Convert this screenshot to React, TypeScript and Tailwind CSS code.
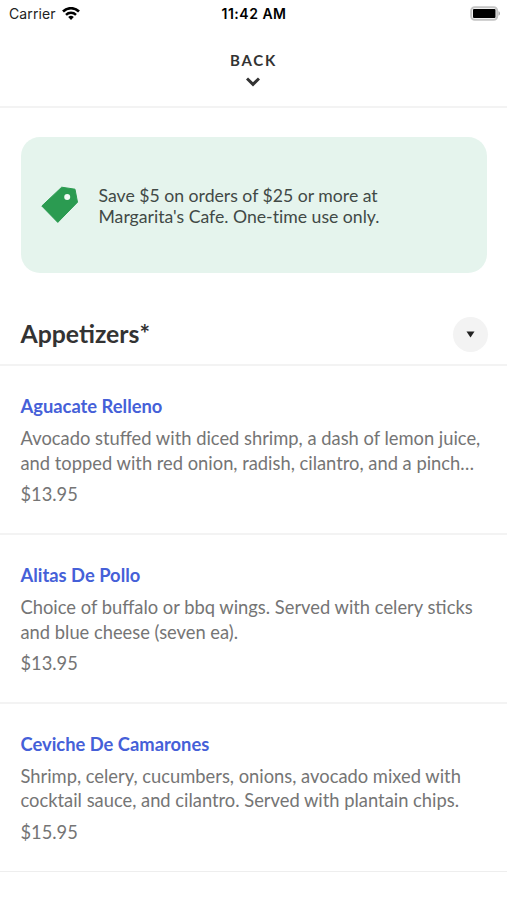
type MenuItem = {
  name: string;
  lines: string[];
  price: string;
};

const appetizers: MenuItem[] = [
  {
    name: "Aguacate Relleno",
    lines: [
      "Avocado stuffed with diced shrimp, a dash of lemon juice,",
      "and topped with red onion, radish, cilantro, and a pinch…",
    ],
    price: "$13.95",
  },
  {
    name: "Alitas De Pollo",
    lines: [
      "Choice of buffalo or bbq wings. Served with celery sticks",
      "and blue cheese (seven ea).",
    ],
    price: "$13.95",
  },
  {
    name: "Ceviche De Camarones",
    lines: [
      "Shrimp, celery, cucumbers, onions, avocado mixed with",
      "cocktail sauce, and cilantro. Served with plantain chips.",
    ],
    price: "$15.95",
  },
];

function StatusBar() {
  return (
    <div className="grid h-[27px] grid-cols-3 items-center pl-[9px] pr-[7px] font-['Inter',sans-serif] text-[14px] text-black">
      <div className="flex items-center gap-1.5">
        <span className="tracking-[0.1px] text-[#222]">Carrier</span>
        <svg width="18" height="14" viewBox="0 0 18 14" fill="none" aria-hidden="true">
          <path d="M1 4.5a11.3 11.3 0 0 1 16 0" stroke="black" strokeWidth="2.6" />
          <path d="M4 7.8a7 7 0 0 1 10 0" stroke="black" strokeWidth="2.4" />
          <path d="M9 13 6.2 10.1a4 4 0 0 1 5.6 0Z" fill="black" />
        </svg>
      </div>
      <span className="-ml-px text-center font-semibold tracking-[0.5px]">11:42 AM</span>
      <svg className="justify-self-end" width="30" height="15" viewBox="0 0 30 15" aria-hidden="true">
        <rect x="1.2" y="1.2" width="26" height="12.6" rx="3.5" fill="none" stroke="#c4c4c4" strokeWidth="2" />
        <rect x="3" y="3" width="22.5" height="9" rx="1" fill="black" />
        <path d="M28.5 5.3c2 .7 2 3.7 0 4.4Z" fill="#aaa" />
      </svg>
    </div>
  );
}

function MenuRow({ item }: { item: MenuItem }) {
  return (
    <li className="h-[168.7px] border-b-2 border-[#f3f3f3] px-[20.5px] pt-[28px] last:border-b last:border-[#eee]">
      <h3 className="text-[18.35px] leading-6 font-bold text-[#4560d8]">{item.name}</h3>
      <p className="mt-2 text-[18.34px] leading-[24.5px] whitespace-nowrap text-[#757575]">
        {item.lines.map((line) => (
          <span key={line} className="block">
            {line}
          </span>
        ))}
      </p>
      <p className="mt-[7px] text-[18.3px] leading-6 text-[#757575]">{item.price}</p>
    </li>
  );
}

export default function App() {
  return (
    <div className="h-[900px] w-[507px] overflow-hidden bg-white font-['Lato',sans-serif] text-[#333]">
      <StatusBar />
      <header className="flex h-[81px] flex-col items-center border-b-2 border-[#f3f3f3] pt-[23px]">
        <button className="flex flex-col items-center text-[15px] leading-5 font-bold tracking-[1.7px]">
          BACK
          <svg className="mt-[7px] -ml-px" width="14" height="10" viewBox="0 0 14 10" fill="none" aria-hidden="true">
            <path d="m1 1.5 6 5.8 6-5.8" stroke="#333" strokeWidth="3" />
          </svg>
        </button>
      </header>
      <main>
        <section className="mr-5 ml-[20.5px] mt-[29px] flex h-[136px] items-center rounded-[19px] bg-[#e5f4ed] pl-[20.5px]">
          <svg width="38" height="38" viewBox="0 0 38 38" aria-hidden="true">
            <path
              d="M20.7 1.2 34 3.2 36.5 16.2 16.8 36.4.8 20Z"
              fill="#2b9b51"
              stroke="#2b9b51"
              strokeLinejoin="round"
            />
            <circle cx="26.2" cy="11" r="3" fill="#f3faf6" />
          </svg>
          <p className="ml-[19.5px] pt-px text-[17.65px] leading-[21px] whitespace-nowrap text-[#414946] [font-variant-ligatures:none]">
            Save $5 on orders of $25 or more at
            <br />
            Margarita's Cafe. One-time use only.
          </p>
        </section>
        <div className="flex h-[93.4px] items-center justify-between border-b-2 border-[#f3f3f3] pt-[31px] pr-[19px] pl-[20.5px]">
          <h2 className="text-[24.8px] leading-8 font-bold">Appetizers*</h2>
          <button className="flex size-[35px] items-center justify-center rounded-full bg-[#f3f3f3]" aria-label="Collapse">
            <svg width="9" height="7" viewBox="0 0 9 7" aria-hidden="true">
              <path d="M.5 .5h8L4.5 6.5Z" fill="#222" />
            </svg>
          </button>
        </div>
        <ul>
          {appetizers.map((item) => (
            <MenuRow key={item.name} item={item} />
          ))}
        </ul>
      </main>
    </div>
  );
}
